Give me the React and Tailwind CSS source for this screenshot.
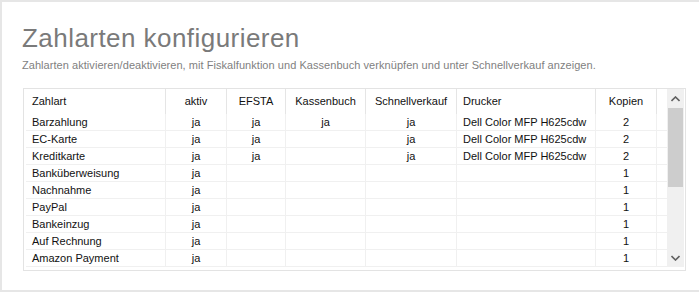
import React from "react";

const columns = [
  { key: "name", label: "Zahlart", width: "w-[140px]", align: "left" },
  { key: "aktiv", label: "aktiv", width: "w-[61px]", align: "center" },
  { key: "efsta", label: "EFSTA", width: "w-[59px]", align: "center" },
  { key: "kassenbuch", label: "Kassenbuch", width: "w-[80px]", align: "center" },
  { key: "schnell", label: "Schnellverkauf", width: "w-[91px]", align: "center" },
  { key: "drucker", label: "Drucker", width: "w-[139px]", align: "left" },
  { key: "kopien", label: "Kopien", width: "w-[61px]", align: "center" },
];

const printer = "Dell Color MFP H625cdw";

const rows = [
  { name: "Barzahlung", aktiv: "ja", efsta: "ja", kassenbuch: "ja", schnell: "ja", drucker: printer, kopien: "2" },
  { name: "EC-Karte", aktiv: "ja", efsta: "ja", kassenbuch: "", schnell: "ja", drucker: printer, kopien: "2" },
  { name: "Kreditkarte", aktiv: "ja", efsta: "ja", kassenbuch: "", schnell: "ja", drucker: printer, kopien: "2" },
  { name: "Banküberweisung", aktiv: "ja", kopien: "1" },
  { name: "Nachnahme", aktiv: "ja", kopien: "1" },
  { name: "PayPal", aktiv: "ja", kopien: "1" },
  { name: "Bankeinzug", aktiv: "ja", kopien: "1" },
  { name: "Auf Rechnung", aktiv: "ja", kopien: "1" },
  { name: "Amazon Payment", aktiv: "ja", kopien: "1" },
];

const ScrollBar = () => (
  <div className="w-[17px] mb-[3px] bg-[#f0f0f0] flex flex-col">
    <div className="h-[19px] flex items-center justify-center">
      <svg width="9" height="6" viewBox="0 0 9 6">
        <path d="M0.5 5 L4.5 1 L8.5 5" fill="none" stroke="#606060" strokeWidth="1.6" />
      </svg>
    </div>
    <div className="mx-[1px] h-[79px] bg-[#cdcdcd]" />
    <div className="flex-1" />
    <div className="h-[19px] flex items-center justify-center">
      <svg width="9" height="6" viewBox="0 0 9 6">
        <path d="M0.5 1 L4.5 5 L8.5 1" fill="none" stroke="#606060" strokeWidth="1.6" />
      </svg>
    </div>
  </div>
);

export default function App() {
  return (
    <div className="w-[699px] h-[292px] overflow-hidden bg-white border-t-2 border-l-2 border-b-2 border-[#e6e6e6] pl-[20px] font-['Liberation_Sans',Arial,sans-serif]">
      <h1 className="mt-[21px] text-[26px] leading-[30px] tracking-[0.45px] text-[#7a7a7a] font-normal">
        Zahlarten konfigurieren
      </h1>
      <p className="mt-[6px] text-[11px] leading-[13px] tracking-[0.05px] text-[#7f7f7f]">
        Zahlarten aktivieren/deaktivieren, mit Fiskalfunktion und Kassenbuch verknüpfen und unter Schnellverkauf anzeigen.
      </p>

      <div className="mt-[16px] ml-[1px] w-[663px] h-[183px] border border-[#e3e3e3] flex pl-[2px] text-[11px] text-[#111111]">
        <div className="w-[641px]">
          <div className="flex h-[25px]">
            {columns.map((c) => (
              <div
                key={c.key}
                className={`${c.width} h-full flex items-center border-r border-[#e5e5e5] ${
                  c.align === "left" ? "pl-[6px]" : "justify-center"
                }`}
              >
                {c.label}
              </div>
            ))}
            <div className="flex-1" />
          </div>
          {rows.map((r) => (
            <div key={r.name} className="flex h-[17px] border-b border-[#f0f0f0]">
              {columns.map((c) => (
                <div
                  key={c.key}
                  className={`${c.width} h-full flex items-center border-r border-[#f0f0f0] ${
                    c.align === "left" ? "pl-[6px]" : "justify-center"
                  }`}
                >
                  {r[c.key] || ""}
                </div>
              ))}
              <div className="flex-1" />
            </div>
          ))}
        </div>
        <ScrollBar />
      </div>
    </div>
  );
}
